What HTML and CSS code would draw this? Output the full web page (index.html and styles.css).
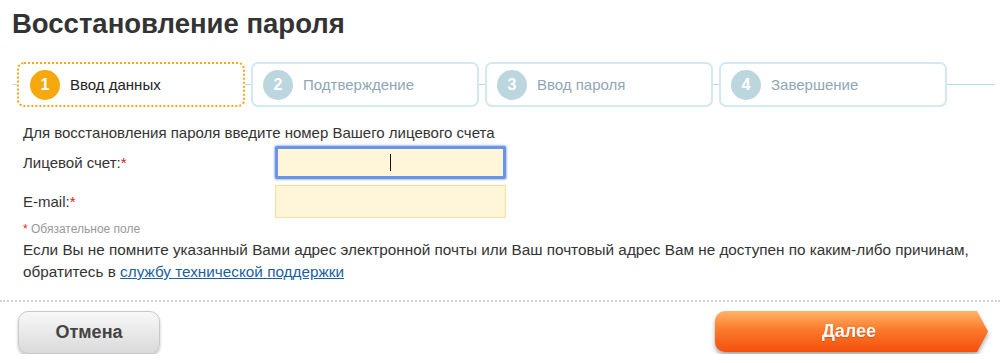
FILE: index.html
```html
<!DOCTYPE html>
<html lang="ru">
<head>
    <meta charset="UTF-8">
    <title>Восстановление пароля</title>
    <link rel="stylesheet" href="styles.css">
</head>
<body>
    <div class="page">
        <h1>Восстановление пароля</h1>

        <div class="steps">
            <div class="step active"><span class="num">1</span>Ввод данных</div>
            <div class="step"><span class="num">2</span>Подтверждение</div>
            <div class="step"><span class="num">3</span>Ввод пароля</div>
            <div class="step"><span class="num">4</span>Завершение</div>
        </div>

        <p class="intro">Для восстановления пароля введите номер Вашего лицевого счета</p>

        <div class="form-row">
            <label for="account">Лицевой счет:<span class="req">*</span></label>
            <div class="field focused"><input id="account" type="text"><span class="caret"></span></div>
        </div>
        <div class="form-row">
            <label for="email">E-mail:<span class="req">*</span></label>
            <div class="field"><input id="email" type="text"></div>
        </div>

        <p class="note"><span class="req">*</span> Обязательное поле</p>

        <p class="help">Если Вы не помните указанный Вами адрес электронной почты или Ваш почтовый адрес Вам не доступен по каким-либо причинам, обратитесь в <a href="#">службу технической поддержки</a></p>
    </div>

    <div class="actions">
        <button class="btn-cancel">Отмена</button>
        <div class="next-wrap"><button class="btn-next">Далее</button></div>
    </div>
</body>
</html>
```

FILE: styles.css
```css
body {
    margin: 0;
    font-family: "Liberation Sans", Arial, sans-serif;
    color: #333;
    background: #fff;
}

.page {
    padding: 0 15px 0 12px;
}

h1 {
    margin: 8px 0 0;
    font-size: 27.5px;
    line-height: 32px;
    font-weight: bold;
    color: #333;
}

/* steps bar with a thin line running behind */
.steps {
    display: flex;
    gap: 6px;
    margin: 22px -15px 0 0;
    padding-left: 5px;
    background: linear-gradient(#b5dbe6, #b5dbe6) 0 50% / calc(100% - 5px) 1px no-repeat;
}

.step {
    box-sizing: border-box;
    width: 228px;
    height: 45px;
    display: flex;
    align-items: center;
    padding-left: 10px;
    border: 2px solid #d3e8ef;
    border-radius: 7px;
    background: #fff;
    font-size: 15px;
    color: #8fa7b5;
}

.step.active {
    border: 2px dotted #f5a81c;
    color: #222;
    padding-left: 11px;
}

.num {
    width: 30px;
    height: 30px;
    border-radius: 50%;
    background: #bcd6e0;
    color: #fff;
    font-size: 16px;
    font-weight: bold;
    display: flex;
    align-items: center;
    justify-content: center;
    margin-right: 10px;
}

.active .num {
    background: #f5a90f;
}

.intro {
    margin: 16px 0 0 11px;
    font-size: 15px;
    line-height: 20px;
}

.form-row {
    display: flex;
    align-items: center;
    margin: 3px 0 0 11px;
}

.form-row + .form-row {
    margin-top: 6px;
}

.form-row label {
    width: 252px;
    font-size: 15px;
}

.req {
    color: #e0201c;
}

.field {
    position: relative;
    width: 231px;
    height: 33px;
}

.field input {
    box-sizing: border-box;
    width: 100%;
    height: 100%;
    margin: 0;
    border: 1px solid #fbdf94;
    background: #fff5d8;
    text-align: center;
    font-size: 15px;
    outline: none;
}

.field.focused input {
    border: 3px solid #6b93e6;
    box-shadow: 0 0 2px 1px #a9c0f2;
    border-radius: 2px;
}

.caret {
    position: absolute;
    left: 115px;
    top: 8px;
    width: 1px;
    height: 17px;
    background: #111;
}

.note {
    margin: 3px 0 0 11px;
    font-size: 12px;
    line-height: 16px;
    color: #999;
}

.help {
    margin: 2px 0 0 11px;
    font-size: 15.3px;
    line-height: 22px;
}

.help a {
    color: #1c5f9e;
}

.actions {
    margin-top: 17px;
    border-top: 2px dotted #d2d2d2;
    display: flex;
    justify-content: space-between;
    align-items: flex-start;
    padding: 9px 12px 0 18px;
}

.btn-cancel {
    width: 142px;
    height: 43px;
    border: 1px solid #c9c9c9;
    border-radius: 10px;
    background: linear-gradient(#f8f8f8, #dadada);
    box-shadow: 0 2px 3px rgba(0, 0, 0, 0.25);
    font-family: "Liberation Sans", Arial, sans-serif;
    font-size: 18px;
    font-weight: bold;
    color: #444;
}

.next-wrap {
    filter: drop-shadow(0 3px 2px rgba(0, 0, 0, 0.35));
}

.btn-next {
    display: block;
    width: 273px;
    height: 41px;
    border: none;
    border-radius: 10px 0 0 10px;
    background: linear-gradient(#ffb469, #fb7a2c 45%, #f4500c);
    clip-path: polygon(0 0, calc(100% - 11px) 0, 100% 50%, calc(100% - 11px) 100%, 0 100%);
    font-family: "Liberation Sans", Arial, sans-serif;
    font-size: 18px;
    font-weight: bold;
    color: #fff;
    text-shadow: 0 1px 1px rgba(150, 50, 0, 0.4);
    padding-right: 11px;
}
```
